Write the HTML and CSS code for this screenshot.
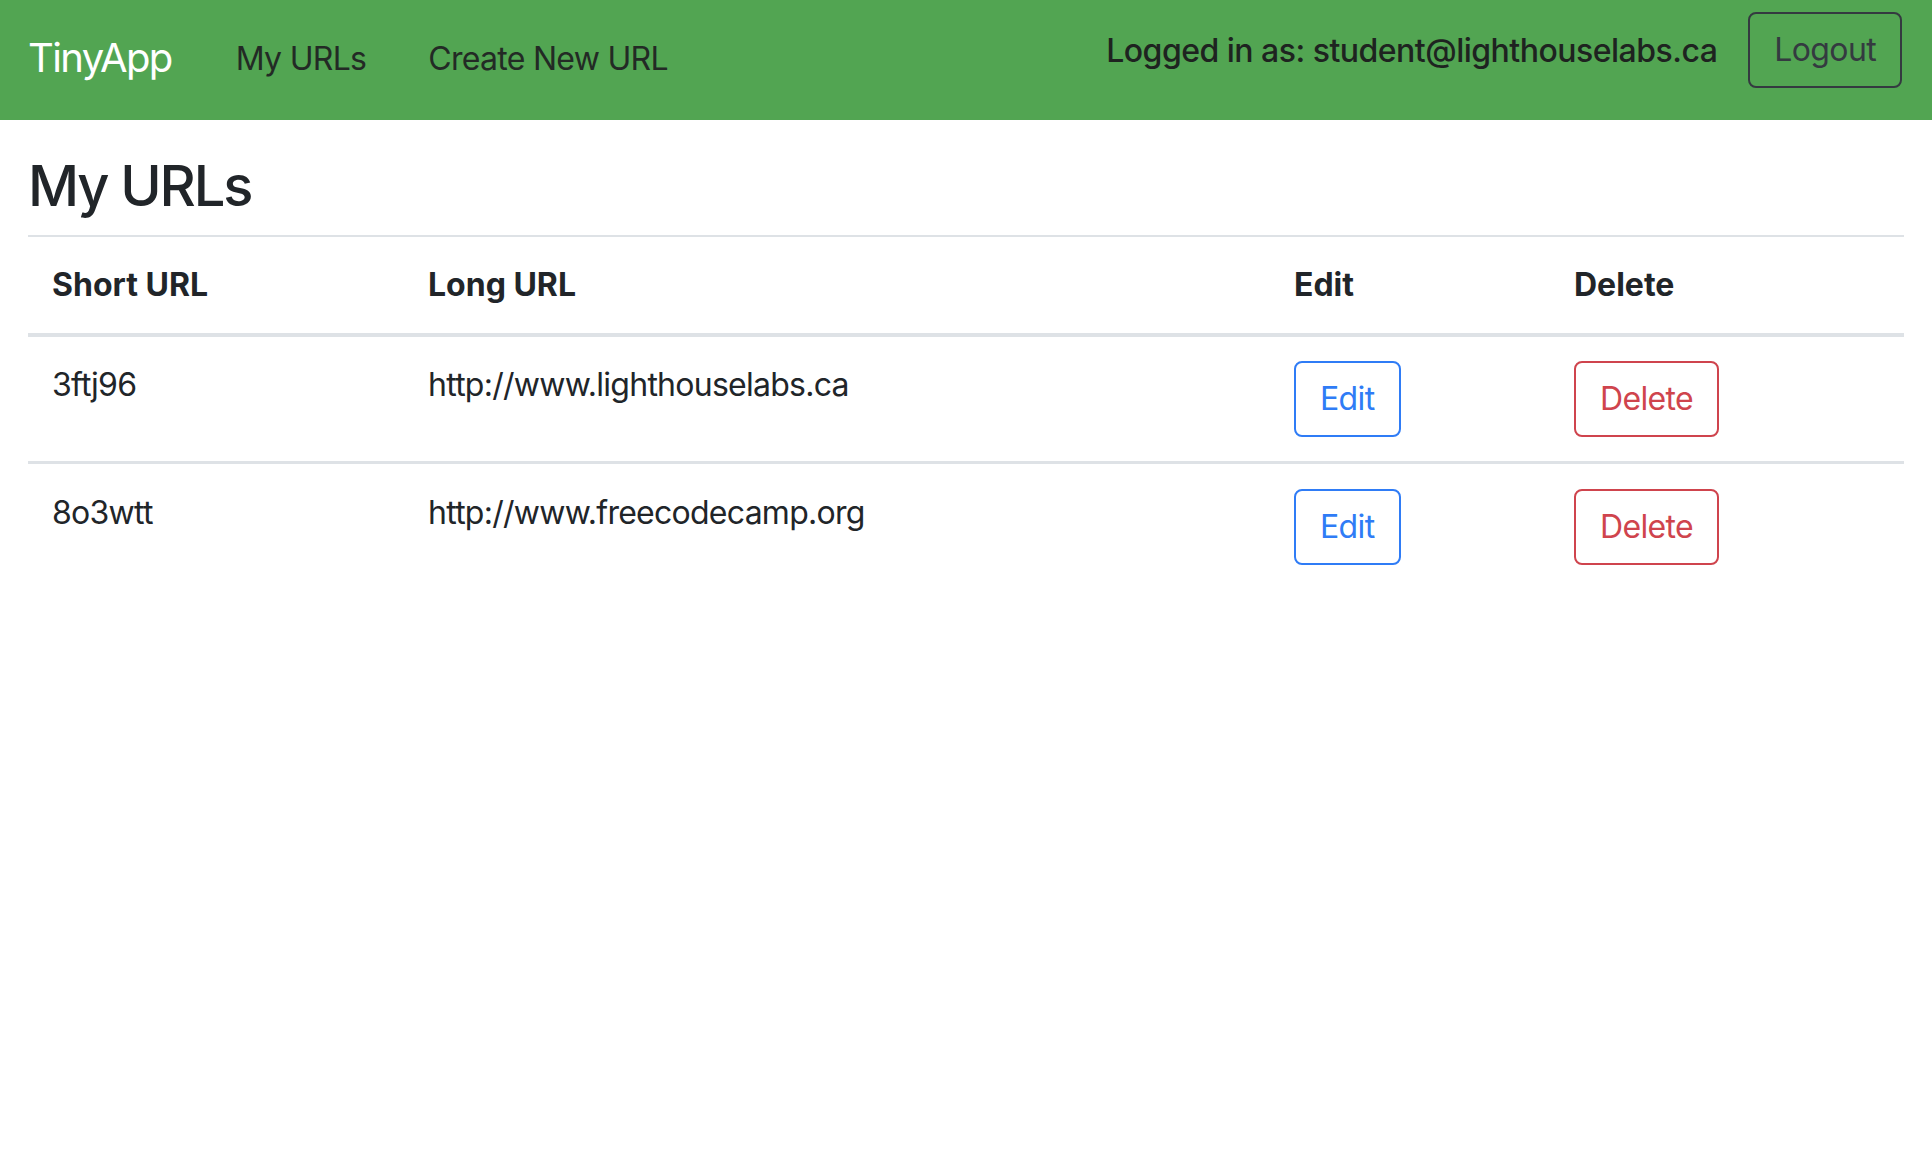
FILE: index.html
```html
<!DOCTYPE html>
<html lang="en">
<head>
<meta charset="utf-8">
<title>TinyApp - My URLs</title>
<link rel="stylesheet" href="styles.css">
</head>
<body>
<nav class="navbar">
  <a class="brand" href="#">TinyApp</a>
  <ul class="nav-links">
    <li><a href="#">My URLs</a></li>
    <li><a href="#">Create New URL</a></li>
  </ul>
  <form class="user">
    <span class="user-label">Logged in as: student@lighthouselabs.ca</span>
    <button type="button" class="btn btn-dark">Logout</button>
  </form>
</nav>
<main class="container">
  <h3 class="title">My URLs</h3>
  <table class="urls">
    <colgroup>
      <col class="c-short">
      <col class="c-long">
      <col class="c-edit">
      <col class="c-delete">
    </colgroup>
    <thead>
      <tr>
        <th>Short URL</th>
        <th>Long URL</th>
        <th>Edit</th>
        <th>Delete</th>
      </tr>
    </thead>
    <tbody>
      <tr>
        <td>3ftj96</td>
        <td>http://www.lighthouselabs.ca</td>
        <td><button type="button" class="btn btn-blue">Edit</button></td>
        <td><button type="button" class="btn btn-red">Delete</button></td>
      </tr>
      <tr>
        <td>8o3wtt</td>
        <td>http://www.freecodecamp.org</td>
        <td><button type="button" class="btn btn-blue">Edit</button></td>
        <td><button type="button" class="btn btn-red">Delete</button></td>
      </tr>
    </tbody>
  </table>
</main>
</body>
</html>
```
FILE: styles.css
```css
* { box-sizing: border-box; }

html, body {
  margin: 0;
  padding: 0;
  background: #ffffff;
}

body {
  font-family: Inter, "Noto Sans", "Liberation Sans", sans-serif;
  font-size: 32px;
  line-height: 48px;
  color: #212529;
}

.navbar {
  display: flex;
  align-items: flex-start;
  height: 120px;
  padding: 0 30px 0 28px;
  background: #52a552;
}

.brand {
  margin-top: 28px;
  font-size: 40px;
  line-height: 60px;
  letter-spacing: -0.04em;
  color: #ffffff;
  text-decoration: none;
}

.nav-links {
  display: flex;
  gap: 62px;
  margin: 35px 0 0 64px;
  padding: 0;
  list-style: none;
}

.nav-links a {
  color: #232a25;
  letter-spacing: -0.022em;
  text-decoration: none;
}

.user {
  display: flex;
  align-items: baseline;
  gap: 31px;
  margin: 12px 0 0 auto;
}

.user-label {
  color: #1e2320;
  font-weight: 500;
  letter-spacing: -0.016em;
  position: relative;
  top: 1px;
}

.btn {
  display: inline-block;
  font-family: inherit;
  font-size: 32px;
  line-height: 48px;
  letter-spacing: -0.02em;
  padding: 12px 24px;
  border: 2px solid;
  border-radius: 8px;
  background: transparent;
  cursor: pointer;
}

.btn-dark {
  border-color: #343a40;
  color: #343a40;
}

.btn-blue {
  border-color: #2f7cf6;
  color: #2f7cf6;
}

.btn-red {
  border-color: #cf444d;
  color: #cf444d;
}

.container {
  padding: 0 28px;
}

.title {
  margin: 33px 0 15px;
  font-size: 56px;
  line-height: 67px;
  font-weight: 500;
  letter-spacing: -0.038em;
}

.urls {
  width: 100%;
  table-layout: fixed;
  border-collapse: separate;
  border-spacing: 0;
}

.c-short { width: 376px; }
.c-long { width: 866px; }
.c-edit { width: 280px; }
.c-delete { width: 354px; }

.urls th,
.urls td {
  padding: 24px;
  text-align: left;
  vertical-align: top;
}

.urls td {
  letter-spacing: -0.023em;
}

.urls th {
  font-weight: 700;
  border-top: 2px solid #dee2e6;
  border-bottom: 4px solid #dee2e6;
}

.urls tbody tr + tr td {
  border-top: 3px solid #dee2e6;
  padding-top: 25px;
}
```
